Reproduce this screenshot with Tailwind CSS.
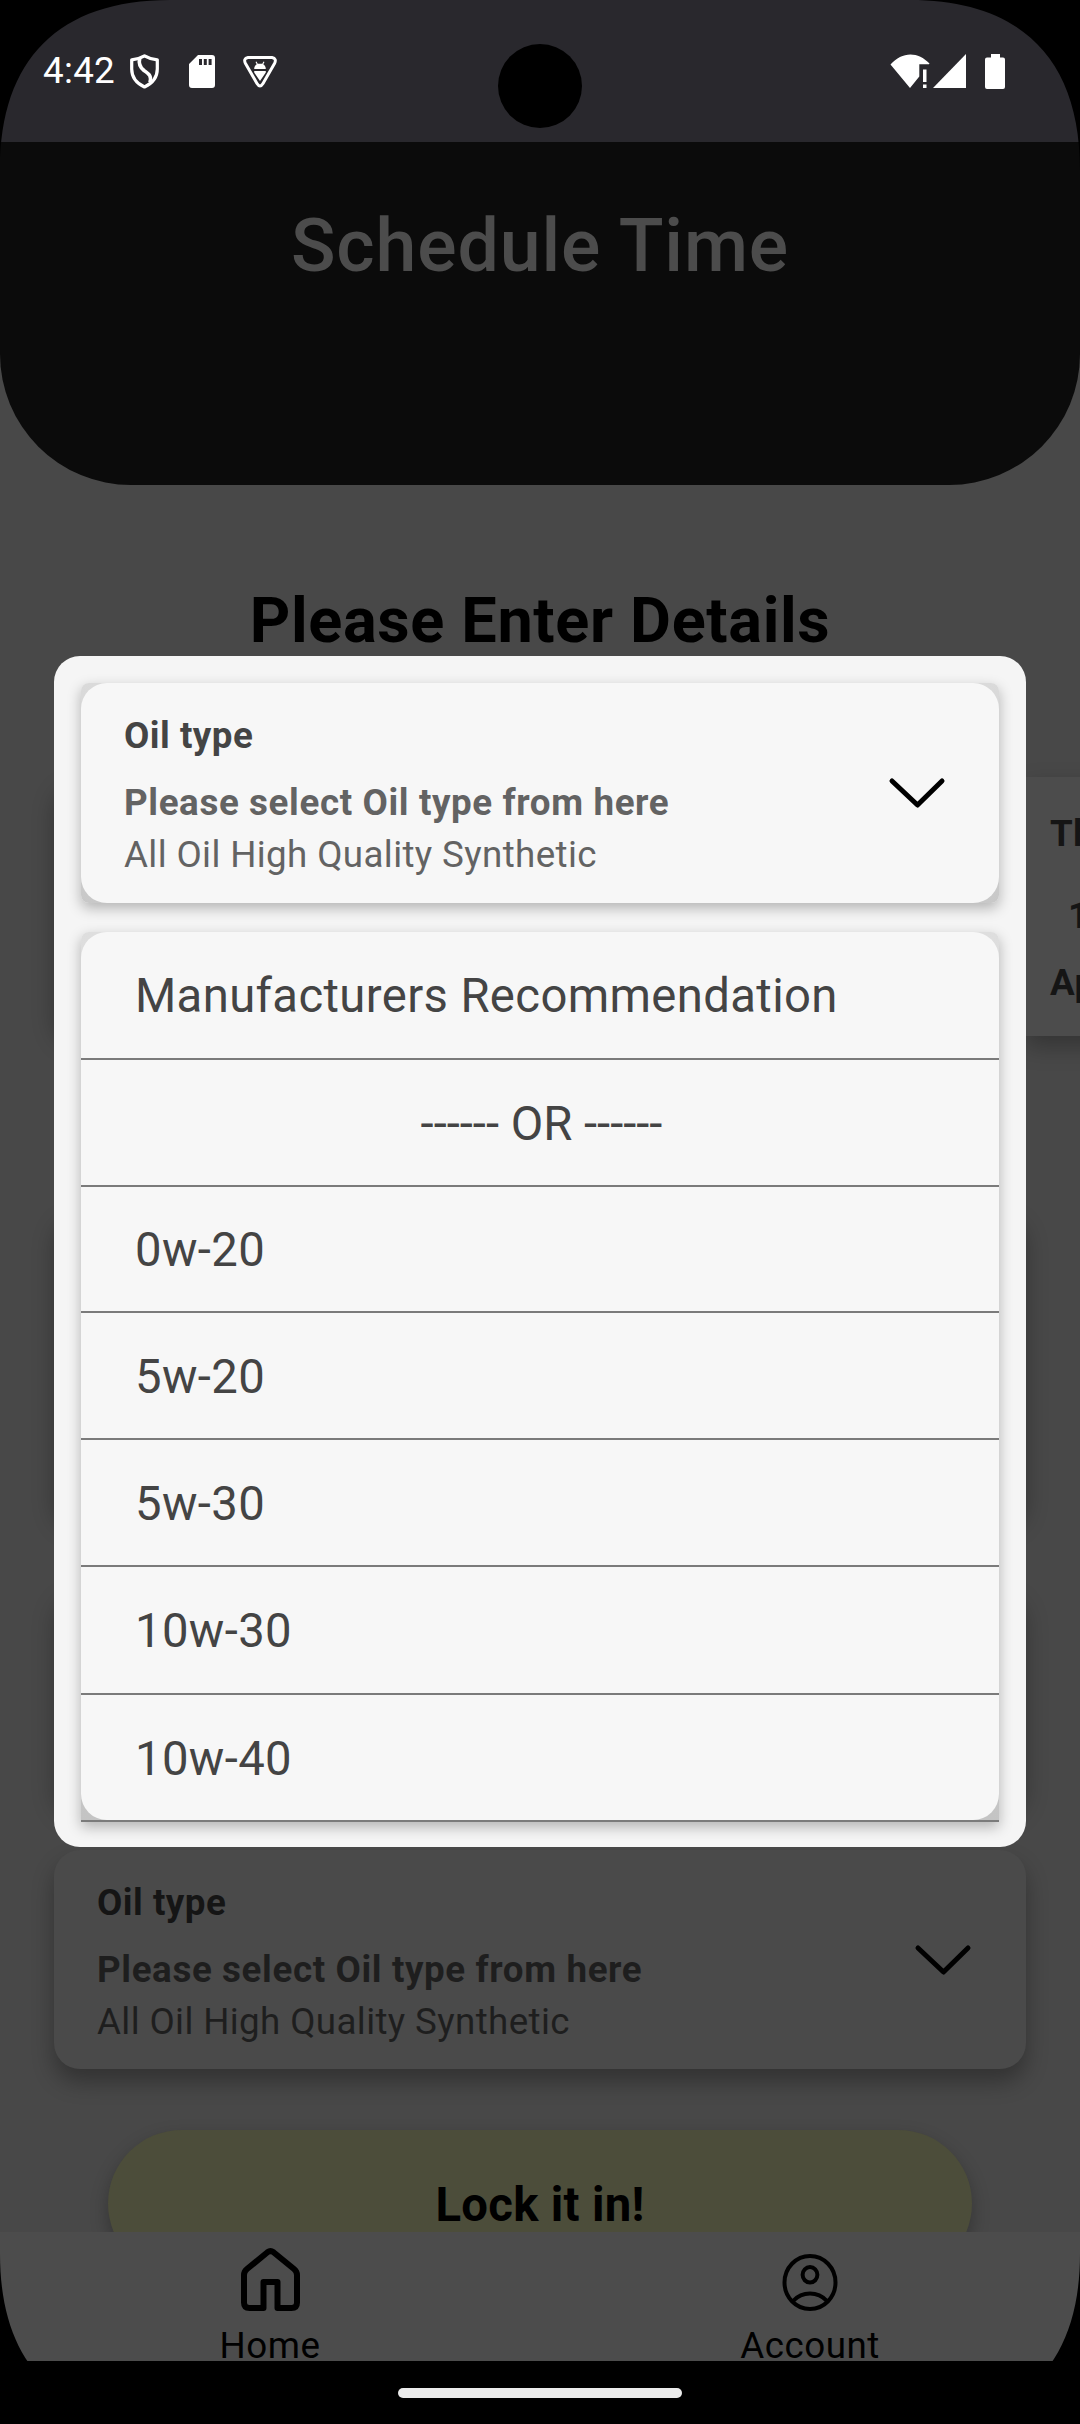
<!DOCTYPE html>
<html lang="en">
<head>
<meta charset="utf-8">
<title>Schedule Time</title>
<script src="https://cdn.jsdelivr.net/npm/@tailwindcss/browser@4"></script>
</head>
<body class="bg-black font-['Roboto',sans-serif]">
<div class="relative flex h-[2424px] w-[1080px] flex-col overflow-hidden bg-black">

  <!-- Status bar -->
  <header class="flex h-[142px] shrink-0 items-start justify-between bg-[#29282d] pt-[54px] pr-[75px] pl-[43px] text-white">
    <div class="flex h-[35px] items-center">
      <span class="w-[87px] pb-[2px] text-[36.75px] leading-[35px] tracking-[0.3px]">4:42</span>
      <svg class="h-[35px] w-[29px]" viewBox="0 0 29 35" fill="none" stroke="currentColor" stroke-width="3.2" stroke-linejoin="round">
        <path d="M14.5 1.8C10.500 4.200 6 5.400 1.700 5.800V15C1.700 23 7 29.500 14.500 33C22 29.500 27.300 23 27.300 15V5.800C23 5.400 18.500 4.200 14.500 1.800Z"/>
        <path stroke-width="3.6" d="M9.800 4C8.500 9 9.500 13 14 16.500C20 20.500 21.500 22.500 20 28.500"/>
      </svg>
      <svg class="ml-[30px] h-[33px] w-[26px]" viewBox="0 0 26 33" fill="currentColor">
        <path fill-rule="evenodd" d="M9 0H23Q26 0 26 3V30Q26 33 23 33H3Q0 33 0 30V9ZM10 4V10H13V4ZM14.800 4V10H17.800V4ZM19.600 4V10H22.600V4Z"/>
      </svg>
      <svg class="ml-[28px] h-[33px] w-[34px]" viewBox="0 0 34 33" fill="none" stroke="currentColor">
        <path stroke-width="3" stroke-linejoin="round" d="M5 2.500H29Q34 3.500 31.500 8.500L20 28.500Q17 33.500 14 28.500L2.500 8.500Q0 3.500 5 2.500Z"/>
        <path fill="currentColor" stroke="none" d="M11.200 14C11.200 11.500 12.500 10 13.700 9.300L12.500 7L13.500 6.500L14.700 8.800H19.300L20.500 6.500L21.500 7L20.300 9.300C21.500 10 22.800 11.500 22.800 14ZM11.200 16H22.800V17.500L17 26L11.200 17.500Z"/>
      </svg>
    </div>
    <div class="flex h-[35px] items-start">
      <svg class="h-[34px] w-[40px]" viewBox="0 0 40 34" fill="currentColor">
        <path d="M0.500 10.500C12-2.800 28-2.800 39.500 9.500L39 10.300H29.300V22.500L20 34Z"/>
        <path d="M33 15.500H36.500V28H33ZM33 30.500H36.500V34H33Z"/>
      </svg>
      <svg class="ml-[3px] h-[34px] w-[33px]" viewBox="0 0 33 34" fill="currentColor"><path d="M33 0V34H0Z"/></svg>
      <svg class="ml-[19px] h-[35px] w-[20px]" viewBox="0 0 20 35" fill="currentColor"><path d="M6 0H15V3.500H18Q20 3.500 20 5.500V33Q20 35 18 35H2Q0 35 0 33V5.500Q0 3.500 2 3.500H6Z"/></svg>
    </div>
  </header>

  <!-- Page behind the scrim -->
  <main class="flex h-[2090px] shrink-0 flex-col overflow-hidden bg-[#484848]">
    <div class="flex h-[343px] shrink-0 justify-center rounded-b-[131px] bg-[#0b0b0b] pt-[61px]">
      <h1 class="text-[73.5px] leading-[86px] font-medium tracking-[0.85px] whitespace-nowrap text-[#4c4c4c]">Schedule Time</h1>
    </div>
    <h2 class="mt-[99px] h-[74px] shrink-0 text-center text-[63px] leading-[74px] font-bold tracking-[0.65px] text-black">Please Enter Details</h2>
    <section class="mt-[119px] flex h-[259px] shrink-0 gap-6 pl-[54px]">
      <div class="w-[948px] shrink-0 rounded-[26px] bg-[#4b4b4b] shadow-[0_10px_22px_rgba(0,0,0,0.28)]"></div>
      <div class="w-[300px] shrink-0 bg-[#4c4c4c] pt-[35px] pl-[24px] text-[36.75px] leading-[43px] font-bold tracking-[0.5px] text-[#151515] shadow-[0_10px_22px_rgba(0,0,0,0.28)]">
        <p>Thu</p>
        <p class="mt-[39px] pl-[18px]">14</p>
        <p class="mt-[24px]">Apr</p>
      </div>
    </section>
    <div class="mx-[54px] mt-[174px] h-[310px] shrink-0 rounded-[26px] bg-[#4b4b4b] shadow-[0_10px_22px_rgba(0,0,0,0.28)]"></div>
    <div class="mx-[54px] mt-[70px] h-[220px] shrink-0 rounded-[26px] bg-[#4b4b4b] shadow-[0_8px_22px_rgba(0,0,0,0.25)]"></div>
    <section class="mx-[54px] mt-[40px] flex h-[219px] shrink-0 items-center justify-between rounded-[26px] bg-[#4a4a4a] pr-[54px] pl-[43px] shadow-[0_13px_22px_rgba(0,0,0,0.3)]">
      <div class="pt-[4px] text-[36.75px] leading-[43px] text-[#1e1e1e]">
        <p class="font-bold tracking-[0.5px] text-[#151515]">Oil type</p>
        <p class="mt-[24px] font-bold tracking-[0.62px]">Please select Oil type from here</p>
        <p class="mt-[9px] tracking-[0.37px]">All Oil High Quality Synthetic</p>
      </div>
      <svg class="h-[32px] w-[58px]" viewBox="0 0 58 32" fill="none" stroke="#000" stroke-width="5" stroke-linecap="round" stroke-linejoin="round"><path d="M4 4L29.500 28L54 4"/></svg>
    </section>
    <button class="mx-[108px] mt-[61px] h-[147px] shrink-0 rounded-full bg-[#4c4d3a] pt-[4px] text-[47.25px] font-bold tracking-[0.3px] text-black shadow-[0_8px_18px_rgba(0,0,0,0.28)]">Lock it in!</button>
  </main>

  <!-- Bottom navigation -->
  <nav class="z-10 grid h-[129px] shrink-0 grid-cols-2 overflow-hidden bg-[#4c4c4c] text-[36.75px] leading-[43px] tracking-[0.5px] text-black">
    <div class="flex flex-col items-center pt-[16px]">
      <svg class="h-[63px] w-[59px]" viewBox="0 0 59 63" fill="none" stroke="currentColor" stroke-width="6" stroke-linejoin="round">
        <path d="M26.500 4.200Q29.500 2 32.500 4.200L53 21Q56 23.500 56 27V54.500Q56 60 50.500 60H36.500V34H22.500V60H8.500Q3 60 3 54.500V27Q3 23.500 6 21Z"/>
      </svg>
      <span class="mt-[13px]">Home</span>
    </div>
    <div class="flex flex-col items-center pt-[22px]">
      <svg class="h-[57px] w-[56px]" viewBox="0 0 56 57" fill="none" stroke="currentColor" stroke-width="4">
        <ellipse cx="28" cy="28.500" rx="25.500" ry="26.500"/>
        <ellipse cx="28" cy="20.800" rx="7.400" ry="7.700"/>
        <path d="M11 47Q18 39.500 28 39.500T45 47"/>
      </svg>
      <span class="mt-[13px]">Account</span>
    </div>
  </nav>

  <!-- System gesture area -->
  <footer class="z-10 flex h-[63px] shrink-0 justify-center bg-black pt-[27px]">
    <div class="h-[10px] w-[284px] rounded-full bg-[#ebebeb]"></div>
  </footer>

  <!-- Oil type picker dialog -->
  <div class="absolute top-[656px] left-[54px] flex h-[1191px] w-[972px] flex-col overflow-hidden rounded-[26px] bg-[#f5f5f5] px-[27px] pt-[27px]">
    <div class="h-[220px] shrink-0 rounded-[8px] bg-linear-to-b from-[#dadada] to-[#c8c8c8] shadow-[0_5px_14px_rgba(0,0,0,0.28)]">
      <div class="flex h-full items-center justify-between rounded-[26px] bg-[#f7f7f7] pr-[53px] pl-[43px]">
        <div class="pt-[4px] text-[36.75px] leading-[43px] text-[#636363]">
          <p class="font-bold tracking-[0.5px] text-[#444]">Oil type</p>
          <p class="mt-[24px] font-bold tracking-[0.62px]">Please select Oil type from here</p>
          <p class="mt-[9px] tracking-[0.37px]">All Oil High Quality Synthetic</p>
        </div>
        <svg class="h-[32px] w-[58px]" viewBox="0 0 58 32" fill="none" stroke="#000" stroke-width="5" stroke-linecap="round" stroke-linejoin="round"><path d="M4 4L29.500 28L54 4"/></svg>
      </div>
    </div>
    <div class="mt-[29px] h-[890px] shrink-0 rounded-t-[8px] bg-linear-to-b from-[#dedede] to-[#c4c4c4] shadow-[0_5px_14px_rgba(0,0,0,0.28)]">
      <ul class="h-[888px] rounded-[26px] bg-[#f7f7f7] text-[47.25px] leading-[55px] tracking-[0.37px] text-[#444]">
        <li class="flex h-[128px] items-center border-b-2 border-[#7b7b7b] pt-[3px] pl-[54px]">Manufacturers Recommendation</li>
        <li class="flex h-[127px] items-center justify-center border-b-2 border-[#7b7b7b] pt-[3px] pl-[3px] tracking-normal">------ OR ------</li>
        <li class="flex h-[126px] items-center border-b-2 border-[#7b7b7b] pt-[3px] pl-[54px]">0w-20</li>
        <li class="flex h-[127px] items-center border-b-2 border-[#7b7b7b] pt-[3px] pl-[54px]">5w-20</li>
        <li class="flex h-[127px] items-center border-b-2 border-[#7b7b7b] pt-[3px] pl-[54px]">5w-30</li>
        <li class="flex h-[128px] items-center border-b-2 border-[#7b7b7b] pt-[3px] pl-[54px]">10w-30</li>
        <li class="flex h-[127px] items-center border-b-2 border-[#7b7b7b] pt-[3px] pl-[54px]">10w-40</li>
      </ul>
    </div>
  </div>

  <!-- Camera cutout and rounded display corners -->
  <div class="absolute top-[44px] left-[498px] size-[84px] rounded-full bg-black"></div>
  <svg class="absolute top-0 left-0 size-[170px]" viewBox="0 0 170 170"><path d="M0 0H170C59 0 0 59 0 170Z"/></svg>
  <svg class="absolute top-0 right-0 size-[170px] -scale-x-100" viewBox="0 0 170 170"><path d="M0 0H170C59 0 0 59 0 170Z"/></svg>
  <svg class="absolute bottom-0 left-0 z-10 h-[170px] w-[170px] -scale-y-100" viewBox="0 0 170 170"><path d="M0 0H170C59 0 0 59 0 170Z"/></svg>
  <svg class="absolute right-0 bottom-0 z-10 h-[170px] w-[170px] -scale-100" viewBox="0 0 170 170"><path d="M0 0H170C59 0 0 59 0 170Z"/></svg>
</div>
</body>
</html>
